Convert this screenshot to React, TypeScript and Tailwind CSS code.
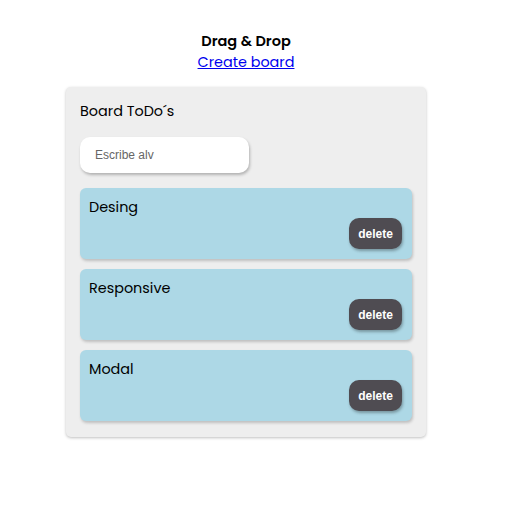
import React, { useState } from 'react';

const FONT = "font-['Poppins','Open_Sans','Noto_Sans',sans-serif]";

const App: React.FC = () => {
  const [tasks, setTasks] = useState(['Desing', 'Responsive', 'Modal']);
  const [text, setText] = useState('');

  return (
    <div className={`min-h-[528px] bg-white flex flex-col items-center pt-[31px] pr-[16px] ${FONT}`}>
      <h1 className="text-[14.5px] leading-[20px] font-semibold text-black">Drag &amp; Drop</h1>
      <a href="#" className="text-[14.4px] leading-[22px] text-[#0000ee] underline">
        Create board
      </a>

      {/* Board */}
      <div className="mt-[14px] w-[360px] bg-[#eeeeee] rounded-[5px] shadow-[0_1px_3px_rgba(0,0,0,0.25)] px-[14px] pt-[13px] pb-[16px]">
        <h2 className="text-[14.4px] leading-[22px] text-black">Board ToDo´s</h2>

        <input
          value={text}
          onChange={(e) => setText(e.target.value)}
          placeholder="Escribe alv"
          className="mt-[15px] w-[169px] h-[36px] bg-white rounded-[10px] px-[15px] text-[12px] font-['Liberation_Sans',Arial,sans-serif] text-[#333] placeholder:text-[#666] outline-none shadow-[1px_2px_3px_rgba(0,0,0,0.25)]"
        />

        <div className="mt-[15px] flex flex-col gap-[10px]">
          {tasks.map((t, i) => (
            <div
              key={t + i}
              className="bg-[#add8e6] rounded-[6px] shadow-[1px_2px_3px_rgba(0,0,0,0.2)] pl-[9px] pr-[10px] pt-[8px] pb-[10px] flex flex-col"
            >
              <span className="text-[14.4px] leading-[22px] text-black">{t}</span>
              <div className="flex justify-end">
                <button
                  onClick={() => setTasks(tasks.filter((_, j) => j !== i))}
                  className="w-[53px] h-[31px] rounded-[10px] bg-[#4f4c52] text-white text-[12px] font-bold font-['Liberation_Sans',Arial,sans-serif] shadow-[1px_2px_3px_rgba(0,0,0,0.3)]"
                >
                  delete
                </button>
              </div>
            </div>
          ))}
        </div>
      </div>
    </div>
  );
};

export default App;
